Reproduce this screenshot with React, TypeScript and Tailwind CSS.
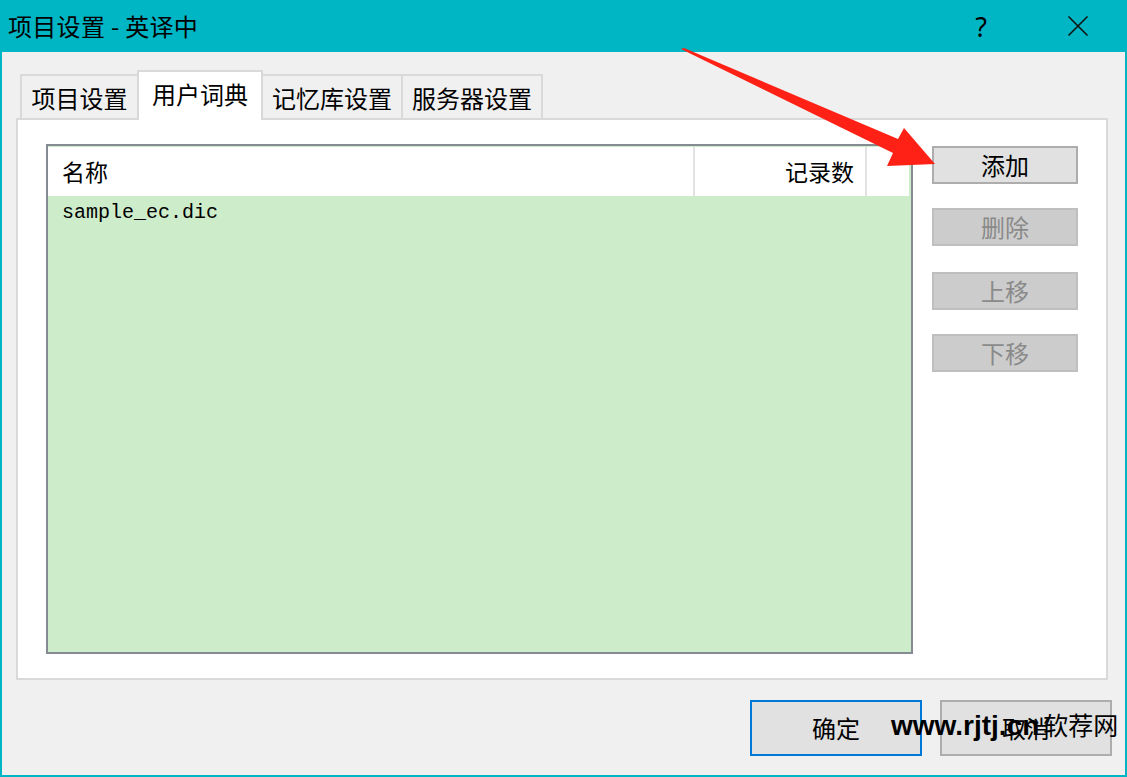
import React from 'react';

const ui = { fontFamily: '"Noto Sans CJK SC", "Noto Sans", sans-serif' };
const mono = { fontFamily: '"Liberation Mono", "Noto Sans CJK SC", monospace' };

const tabs = [
  { label: '项目设置', w: 'w-[117px]', active: false, edge: 'border-l-2 border-t-2' },
  { label: '用户词典', w: 'w-[126px]', active: true, edge: 'border-2 border-b-0' },
  { label: '记忆库设置', w: 'w-[140px]', active: false, edge: 'border-t-2 border-r-2' },
  { label: '服务器设置', w: 'w-[140px]', active: false, edge: 'border-t-2 border-r-2' },
];

const sideButtons = [
  { label: '添加', enabled: true, mt: 'mt-[26px]' },
  { label: '删除', enabled: false, mt: 'mt-[24px]' },
  { label: '上移', enabled: false, mt: 'mt-[26px]' },
  { label: '下移', enabled: false, mt: 'mt-[24px]' },
];

const Arrow = () => (
  <svg className="absolute left-0 top-0 pointer-events-none" width="1127" height="777" viewBox="0 0 1127 777">
    <polygon
      points="681,49 684,48 898,139 904,128 935,164 887,166 893,153"
      fill="#ff2116"
    />
  </svg>
);

export default function App() {
  return (
    <div className="relative w-[1127px] h-[777px] bg-[#f0f0f0] flex flex-col overflow-hidden" style={ui}>
      {/* title bar */}
      <div className="h-[52px] shrink-0 bg-[#00b5c4] flex items-center text-black">
        <span className="pl-[8px] text-[24px] leading-none tracking-[0.3px]">项目设置 - 英译中</span>
        <span className="ml-auto mr-[80px] text-[27px] leading-none" style={{ fontFamily: '"Noto Sans", sans-serif' }}>?</span>
        <svg width="22" height="22" viewBox="0 0 22 22" className="mr-[38px]">
          <path d="M1.5 1.5 L20.5 20.5 M20.5 1.5 L1.5 20.5" stroke="#111" strokeWidth="1.6" />
        </svg>
      </div>

      {/* body */}
      <div className="flex-1 flex flex-col border-l-2 border-r-2 border-b-2 border-[#00b5c4] pl-[14px] pr-[13px]">
        {/* tabs */}
        <div className="flex items-end pl-[4px] pt-[16px] h-[66px]">
          {tabs.map((t) => (
            <div
              key={t.label}
              className={
                t.active
                  ? `${t.w} h-[50px] -mb-[2px] relative z-10 bg-white border-[#d9d9d9] ${t.edge} flex items-center justify-center text-[24px] pb-[4px]`
                  : `${t.w} h-[44px] border-[#d9d9d9] ${t.edge} flex items-center justify-center text-[24px] pt-[2px]`
              }
            >
              {t.label}
            </div>
          ))}
        </div>

        {/* panel */}
        <div className="w-[1092px] h-[562px] bg-white border-2 border-[#d9d9d9] flex pl-[28px] pt-[24px]">
          {/* list */}
          <div className="w-[867px] h-[510px] border-2 border-[#868a92] bg-[#cdecca] flex flex-col">
            <div className="h-[50px] shrink-0 bg-white border-t border-[#cdecca] flex text-[23px] mr-[2px]">
              <div className="w-[645px] flex items-center pl-[14px]">名称</div>
              <div className="w-[174px] border-l-2 border-r-2 border-[#e3e3e3] flex items-center justify-end pr-[11px]">记录数</div>
            </div>
            <div className="h-[34px] flex items-center pl-[14px] text-[20px] text-black" style={mono}>
              sample_ec.dic
            </div>
          </div>

          {/* side buttons */}
          <div className="flex flex-col ml-[19px] -mt-[24px]">
            {sideButtons.map((b) => (
              <div
                key={b.label}
                className={
                  b.enabled
                    ? `${b.mt} w-[146px] h-[38px] bg-[#e1e1e1] border-2 border-[#adadad] flex items-center justify-center text-[24px] text-black`
                    : `${b.mt} w-[146px] h-[38px] bg-[#cccccc] border-2 border-[#bfbfbf] flex items-center justify-center text-[24px] text-[#8a8a8a]`
                }
              >
                {b.label}
              </div>
            ))}
          </div>
        </div>

        {/* footer buttons */}
        <div className="flex justify-end gap-[18px] mt-[20px]">
          <div className="w-[172px] h-[56px] bg-[#e1e1e1] border-2 border-[#0078d7] flex items-center justify-center text-[24px]">确定</div>
          <div className="w-[172px] h-[56px] bg-[#e1e1e1] border-2 border-[#adadad] flex items-center justify-center text-[24px]">取消</div>
        </div>
      </div>

      {/* watermark */}
      <div className="absolute left-[891px] top-[712px] flex items-baseline text-black leading-none">
        <span className="text-[28px] font-bold" style={{ fontFamily: '"Liberation Sans", Arial, sans-serif' }}>www.rjtj.cn</span>
        <span className="text-[25px] ml-[4px]">软荐网</span>
      </div>

      <Arrow />
    </div>
  );
}
